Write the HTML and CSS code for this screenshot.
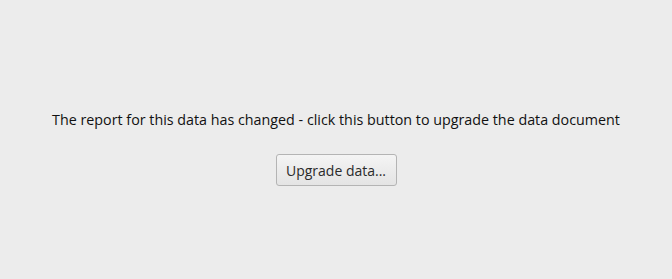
FILE: index.html
```html
<!DOCTYPE html>
<html>
<head>
<meta charset="utf-8">
<link rel="stylesheet" href="styles.css">
</head>
<body>
<main class="panel">
  <p class="message">The report for this data has changed - click this button to upgrade the data document</p>
  <button class="upgrade">Upgrade data...</button>
</main>
</body>
</html>
```
FILE: styles.css
```css
html, body {
  margin: 0;
  padding: 0;
  background: #ececec;
  height: 100%;
}
.panel {
  display: flex;
  flex-direction: column;
  align-items: center;
  padding-top: 110px;
  font-family: "Open Sans", "Noto Sans", sans-serif;
}
.message {
  margin: 0;
  font-size: 14.3px;
  line-height: 20px;
  color: #111111;
}
.upgrade {
  margin-top: 24px;
  width: 121px;
  height: 32px;
  padding: 0;
  border: 1px solid #b4b4b4;
  border-radius: 3px;
  background: linear-gradient(#f4f4f4, #e4e4e4);
  font-family: "Open Sans", "Noto Sans", sans-serif;
  font-size: 14px;
  color: #2a2a2a;
}
```
